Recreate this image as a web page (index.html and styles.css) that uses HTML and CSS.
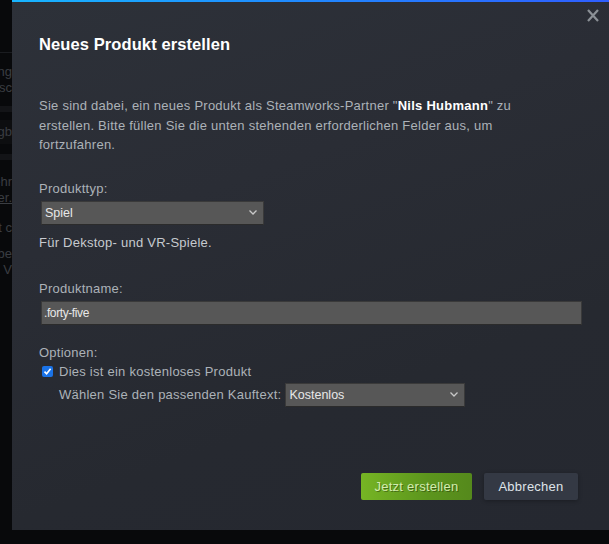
FILE: index.html
```html
<!DOCTYPE html>
<html lang="de">
<head>
<meta charset="utf-8">
<link rel="stylesheet" href="styles.css">
</head>
<body>
<div class="page">
  <div class="strip">
    <div class="bg-rule"></div>
    <div class="bg-line l1">Einstellung</div>
    <div class="bg-line l2">Umschreibung Besc</div>
    <div class="bg-band"></div>
    <div class="bg-box">Festlegung gb</div>
    <div class="bg-band"></div>
    <div class="bg-line l3">Mehr</div>
    <div class="bg-line l4 u">hier.</div>
    <div class="bg-line l5">mit c</div>
    <div class="bg-line l6">dabei be</div>
    <div class="bg-line l7">für alle n V</div>
  </div>
</div>

<div class="dialog">
  <div class="topbar"></div>
  <svg class="close" width="12" height="13" viewBox="0 0 12 13"><path d="M1 1 L11 12 M11 1 L1 12" stroke="#8b9096" stroke-width="2.2" fill="none"/></svg>
  <div class="body">
    <h1 class="title">Neues Produkt erstellen</h1>
    <p class="desc">Sie sind dabei, ein neues Produkt als Steamworks-Partner "<b>Nils Hubmann</b>" zu erstellen. Bitte füllen Sie die unten stehenden erforderlichen Felder aus, um fortzufahren.</p>

    <div class="label l-type">Produkttyp:</div>
    <div class="select sel-type"><span>Spiel</span><svg class="chev" width="8" height="5" viewBox="0 0 8 5"><path d="M0.5 0.5 L4 4 L7.5 0.5" fill="none" stroke="#c8c8c8" stroke-width="1.3"/></svg></div>
    <div class="hint">Für Dekstop- und VR-Spiele.</div>

    <div class="label l-name">Produktname:</div>
    <div class="input">.forty-five</div>

    <div class="label l-opt">Optionen:</div>
    <div class="check-row">
      <span class="checkbox"><svg width="9" height="9" viewBox="0 0 9 9"><path d="M1.5 4.6 L3.6 6.8 L7.6 1.8" fill="none" stroke="#fff" stroke-width="1.6"/></svg></span>
      <span>Dies ist ein kostenloses Produkt</span>
    </div>
    <div class="kauf-row">
      <span>Wählen Sie den passenden Kauftext:</span>
      <div class="select sel-kauf"><span>Kostenlos</span><svg class="chev" width="8" height="5" viewBox="0 0 8 5"><path d="M0.5 0.5 L4 4 L7.5 0.5" fill="none" stroke="#c8c8c8" stroke-width="1.3"/></svg></div>
    </div>

    <div class="actions">
      <div class="btn green">Jetzt erstellen</div>
      <div class="btn grey">Abbrechen</div>
    </div>
  </div>
</div>
</body>
</html>
```
FILE: styles.css
```css
html, body {
  margin: 0;
  padding: 0;
}
body {
  width: 609px;
  height: 544px;
  overflow: hidden;
  background: #08090b;
  font-family: "Liberation Sans", Arial, sans-serif;
  position: relative;
}
.page {
  height: 544px;
}
.strip {
  width: 12px;
  overflow: hidden;
  padding-top: 52px;
  display: flex;
  flex-direction: column;
  align-items: flex-end;
}
.bg-rule {
  width: 12px;
  height: 1px;
  background: #1a1c20;
  flex: none;
}
.bg-line, .bg-box {
  white-space: nowrap;
  font-size: 13px;
  line-height: 16px;
  color: #3a3d42;
  flex: none;
}
.l1 { margin-top: 11px; }
.l2 { margin-top: 0; }
.bg-band {
  width: 12px;
  height: 6px;
  background: #131417;
  margin-top: 10px;
  flex: none;
}
.bg-box {
  margin-top: 8px;
  padding: 4px 0;
  background: #0d0e10;
}
.l3 { margin-top: 14px; }
.l4 { margin-top: 0; }
.u { text-decoration: underline; }
.l5 { margin-top: 14px; }
.l6 { margin-top: 10px; }
.l7 { margin-top: 0; }

.dialog {
  position: absolute;
  left: 12px;
  top: 0;
  width: 597px;
  height: 530px;
  background: linear-gradient(160deg, #2d3139 0%, #2a2d35 35%, #262930 70%, #252830 100%);
}
.topbar {
  height: 2px;
  background: linear-gradient(to right, #18b5ff 0%, #1f8cff 45%, #2f5eff 100%);
}
.close {
  position: absolute;
  right: 10px;
  top: 9px;
}
.body {
  padding: 0 28px 0 29px;
}
.title {
  margin: 30px 0 0 -2px;
  font-size: 16.5px;
  line-height: 24px;
  font-weight: bold;
  color: #ffffff;
  letter-spacing: 0.1px;
}
.desc {
  margin: 40px 0 0 -2px;
  max-width: 490px;
  font-size: 13px;
  line-height: 19.5px;
  color: #acb2b8;
  letter-spacing: 0.25px;
}
.desc b {
  color: #ffffff;
}
.label {
  font-size: 13px;
  line-height: 18px;
  color: #acb2b8;
  margin-left: -2px;
  letter-spacing: 0.25px;
}
.l-type { margin-top: 25px; }
.l-name { margin-top: 28px; }
.l-opt { margin-top: 19px; }

.select {
  box-sizing: border-box;
  height: 24px;
  background: #575757;
  border: 1px solid #3a3a3a;
  border-bottom-color: #2b2b2b;
  display: flex;
  align-items: center;
  justify-content: space-between;
  padding: 0 6px 0 3px;
  color: #e8e8e8;
  font-size: 12.5px;
}
.sel-type {
  width: 223px;
  margin-top: 3px;
}
.chev { flex: none; }
.hint {
  margin-top: 9px;
  font-size: 13px;
  line-height: 18px;
  color: #c6cacf;
  margin-left: -2px;
  letter-spacing: 0.25px;
}
.input {
  box-sizing: border-box;
  margin-top: 3px;
  height: 24px;
  width: 541px;
  background: #575757;
  border: 1px solid #3a3a3a;
  border-bottom-color: #2b2b2b;
  color: #e8e8e8;
  font-size: 12px;
  line-height: 22px;
  padding-left: 2px;
  letter-spacing: -0.4px;
}
.check-row {
  display: flex;
  align-items: center;
  gap: 6px;
  margin-top: 1px;
  height: 18px;
  font-size: 13px;
  color: #acb2b8;
  margin-left: 1px;
  letter-spacing: 0.25px;
}
.checkbox {
  width: 11px;
  height: 11px;
  border-radius: 2px;
  background: #1a73e8;
  display: flex;
  align-items: center;
  justify-content: center;
  flex: none;
}
.kauf-row {
  display: flex;
  align-items: center;
  gap: 4px;
  margin-top: 2px;
  margin-left: 18px;
  font-size: 13px;
  color: #acb2b8;
  letter-spacing: 0.25px;
}
.sel-kauf {
  width: 180px;
  letter-spacing: 0;
}
.actions {
  display: flex;
  justify-content: flex-end;
  gap: 12px;
  margin-top: 66px;
  margin-right: 3px;
}
.btn {
  height: 27px;
  line-height: 27px;
  font-size: 13px;
  border-radius: 2px;
  text-align: center;
  letter-spacing: 0.25px;
}
.green {
  width: 111px;
  background: linear-gradient(to right, #76b524 0%, #5c951d 60%, #55891c 100%);
  color: #d2ecae;
  text-shadow: 1px 1px 0 rgba(0,0,0,0.35);
}
.grey {
  width: 94px;
  background: #343944;
  color: #dfe3e8;
  box-shadow: 0 1px 4px rgba(0,0,0,0.3);
}
```
